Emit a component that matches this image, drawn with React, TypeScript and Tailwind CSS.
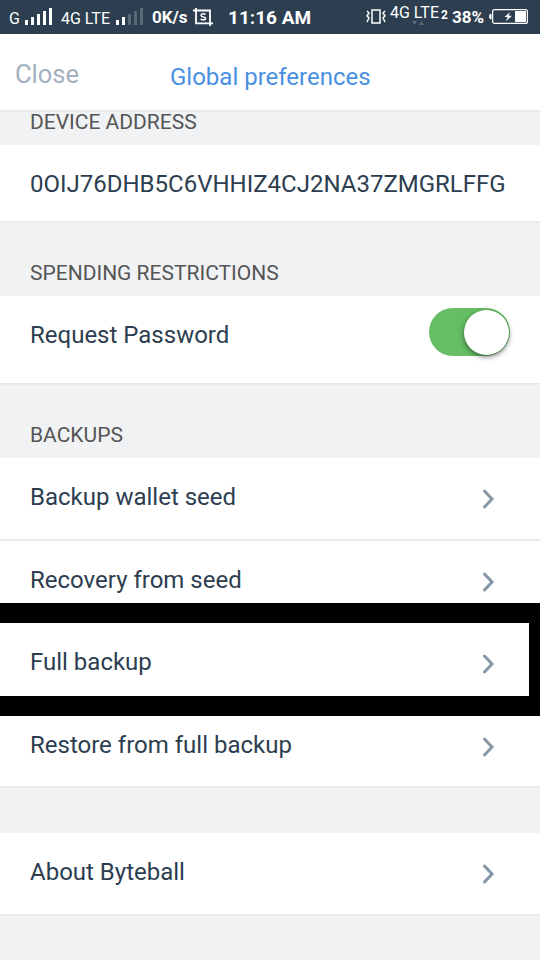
import type { ReactNode } from "react";

function Chevron() {
  return (
    <svg className="mr-[44px] h-[22px] w-[14px] shrink-0" viewBox="0 0 14 22" fill="none">
      <path d="M2.5 3 10 11 2.5 19" stroke="#8597a7" strokeWidth="3" strokeLinecap="round" />
    </svg>
  );
}

function Row({ label, className }: { label: string; className: string }) {
  return (
    <div className={"flex items-start justify-between bg-white pl-[30px] text-2xl leading-8 " + className}>
      <span>{label}</span>
      <span className="flex h-8 items-center pt-[3px]">
        <Chevron />
      </span>
    </div>
  );
}

function Section({ children, className }: { children?: ReactNode; className: string }) {
  return (
    <h2 className={"border-t-2 border-[#e9eaeb] bg-[#f1f2f4] pl-[30px] text-[21px] leading-6 text-[#555] " + className}>
      {children}
    </h2>
  );
}

function Signal({ dim }: { dim: boolean }) {
  const color = dim ? "#5a6978" : "#fff";
  return (
    <svg className="h-[34px] w-7 shrink-0" viewBox="0 0 28 34" fill="#fff">
      <path d="M0 20h3v5H0zM6 17h3v8H6z" />
      <path d="M12 14h3v11h-3zM18 11h3v14h-3zM24 8h3v17h-3z" fill={color} />
    </svg>
  );
}

function StatusBar() {
  return (
    <div className="flex h-[34px] items-start overflow-hidden whitespace-nowrap bg-[#2c3e50] text-white">
      <span className="ml-[9px] w-4 pt-[9px] text-base leading-5">G</span>
      <Signal dim={false} />
      <span className="ml-2 w-[55px] pt-[9px] text-base leading-5">4G LTE</span>
      <Signal dim={true} />
      <span className="ml-2 w-[41px] pt-[7px] text-[17px] font-bold leading-5">0K/s</span>
      <svg className="h-[34px] w-5 shrink-0" viewBox="0 0 20 34" fill="none" stroke="#fff" strokeWidth="1.8">
        <path d="M0 10.5h17v15.5M3 8v15.3h17" />
        <path d="M12.5 14.5c-1-1-4.5-1.2-4.5.9 0 2 4.6 1.1 4.6 3 0 2-3.8 1.7-4.9.5" strokeWidth="1.5" />
      </svg>
      <span className="ml-[15px] w-[138px] pt-[8px] text-[19px] font-bold leading-5">11:16 AM</span>
      <svg className="h-[34px] w-5 shrink-0" viewBox="0 0 20 34" fill="none" stroke="#fff" strokeWidth="1.5">
        <path d="M6 10h8v13H6zM1 11l2 2-2 3 2 2-2 4M19 11l-2 2 2 3-2 2 2 4" />
      </svg>
      <div className="ml-1 flex h-[34px] w-[62px] flex-col pt-[3px]">
        <div className="flex items-end">
          <span className="w-[51px] text-base leading-5">4G LTE</span>
          <span className="text-[12px] font-bold leading-[15px]">2</span>
        </div>
        <svg className="-mt-[3px] ml-[22px] h-[6px] w-3" viewBox="0 0 12 6" fill="#5a6978">
          <path d="M0 1h5L2.5 5zM7 5h5L9.5 1z" />
        </svg>
      </div>
      <span className="w-[37px] pt-[7px] text-[17px] font-bold leading-5">38%</span>
      <svg className="h-[34px] w-10 shrink-0" viewBox="0 0 40 34" fill="none">
        <path d="M2 14Q.5 14 .5 16.5T2 19z" stroke="#fff" fill="#fff" />
        <rect x="3.6" y="9.6" width="34.8" height="13.8" rx="2" stroke="#fff" strokeWidth="1.2" />
        <path d="M26 11h11v11H26zM21 12l-5.5 5h3.2l-2 4.5 6.3-5.8h-3.4z" fill="#fff" />
      </svg>
    </div>
  );
}

export default function App() {
  return (
    <div className="flex h-[960px] w-[540px] flex-col overflow-hidden bg-[#f1f2f4] font-[Roboto,sans-serif] text-[#2c3e50]">
      <StatusBar />
      <header className="flex h-[76px] items-start bg-white">
        <span className="ml-[15px] w-[155px] pt-[24px] text-[25.5px] leading-8 text-[#a2b0bf]">Close</span>
        <h1 className="pt-[27px] text-2xl leading-8 text-[#4a90e2]">Global preferences</h1>
      </header>
      <Section className="h-[35px]">
        <span className="-mt-[2px] block">DEVICE ADDRESS</span>
      </Section>
      <div className="h-[76px] bg-white pl-[30px] pt-[23px] text-2xl leading-8">0OIJ76DHB5C6VHHIZ4CJ2NA37ZMGRLFFG</div>
      <Section className="h-[75px] pt-[38px]">SPENDING RESTRICTIONS</Section>
      <div className="flex h-[87px] items-start justify-between bg-white pl-[30px] pr-[30px] pt-3 text-2xl">
        <span className="pt-[11px] leading-8">Request Password</span>
        <div className="flex h-12 w-[81px] items-center justify-end rounded-full bg-[#65bd64] pr-px">
          <div className="h-[45px] w-[45px] rounded-full bg-white shadow-[0_2px_5px_rgba(0,0,0,0.5)]" />
        </div>
      </div>
      <Section className="h-[75px] pt-[38px]">BACKUPS</Section>
      <Row label="Backup wallet seed" className="h-[81px] pt-[23px]" />
      <Row label="Recovery from seed" className="h-[64px] border-t-2 border-[#e9eaeb] pt-[23px]" />
      <div className="border-y-[20px] border-r-[11px] border-black">
        <Row label="Full backup" className="h-[73px] -mr-[11px] pt-[23px] [clip-path:inset(0_11px_0_0)]" />
      </div>
      <Row label="Restore from full backup" className="h-[70px] pt-[13px]" />
      <Section className="h-[47px]" />
      <Row label="About Byteball" className="h-[81px] pt-[23px]" />
      <Section className="h-[46px]" />
    </div>
  );
}
